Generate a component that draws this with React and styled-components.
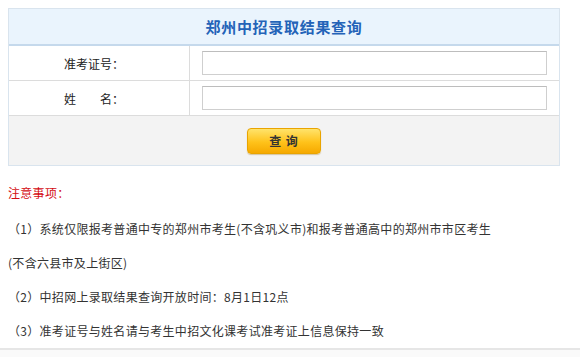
import * as React from "react";
import styled, { createGlobalStyle } from "styled-components";

const GlobalStyle = createGlobalStyle`
  body {
    margin: 0;
    background: #fff;
    font-family: "Noto Sans CJK SC", "Liberation Sans", sans-serif;
  }
`;

const Page = styled.div`
  padding: 8px 20px 0 8px;
`;

const QueryTable = styled.div`
  border: 1px solid #d9e4ee;
  display: flex;
  flex-direction: column;
`;

const TitleBar = styled.div`
  height: 35px;
  background: #eaf4fd;
  border-bottom: 2px solid #c5d9ec;
  display: flex;
  align-items: center;
  justify-content: center;
  color: #2463b8;
  font-size: 15px;
  font-weight: bold;
  letter-spacing: 0.7px;
`;

const FieldRow = styled.div`
  display: grid;
  grid-template-columns: 181px 1fr;
  height: 34px;
  border-bottom: 1px solid #dcdcdc;
`;

const Label = styled.div`
  display: flex;
  align-items: center;
  justify-content: center;
  padding-right: 10px;
  font-size: 12px;
  color: #222;
  border-right: 1px solid #dcdcdc;
  white-space: pre;
`;

const InputCell = styled.div`
  display: flex;
  align-items: center;
  padding: 0 12px 0 12px;
`;

const TextInput = styled.input`
  width: 100%;
  height: 24px;
  box-sizing: border-box;
  border: 1px solid #cfcfcf;
  border-top-color: #bdbdbd;
  background: #fff;
  outline: none;
`;

const ActionRow = styled.div`
  height: 49px;
  background: #f3f3f3;
  display: flex;
  align-items: center;
  justify-content: center;
`;

const SearchButton = styled.button`
  width: 74px;
  height: 26px;
  border: 1px solid #e9a400;
  border-radius: 4px;
  background: linear-gradient(#ffe36b, #ffc21a 55%, #f6a900);
  box-shadow: 0 1px 1px rgba(160, 110, 0, 0.35);
  font-family: "Noto Sans CJK SC", sans-serif;
  font-size: 12px;
  font-weight: bold;
  color: #333;
  letter-spacing: 1px;
  padding: 0;
  cursor: pointer;
`;

const Notes = styled.div`
  margin-top: 14px;
  font-size: 12px;
  color: #333;
  letter-spacing: 0.3px;
`;

const NotesTitle = styled.div`
  line-height: 26px;
  color: #d40d12;
  margin-bottom: 6px;
`;

const NoteLine = styled.div`
  line-height: 34px;
  height: 34px;
  white-space: nowrap;
`;

const Footer = styled.div`
  height: 9px;
  border-top: 2px solid #e6e6e6;
  background: #fafafa;
`;

function App() {
  return (
    <>
      <GlobalStyle />
      <Page>
        <QueryTable>
          <TitleBar>郑州中招录取结果查询</TitleBar>
          <FieldRow>
            <Label>准考证号：</Label>
            <InputCell>
              <TextInput type="text" />
            </InputCell>
          </FieldRow>
          <FieldRow>
            <Label>{"姓　　名："}</Label>
            <InputCell>
              <TextInput type="text" />
            </InputCell>
          </FieldRow>
          <ActionRow>
            <SearchButton type="button">查 询</SearchButton>
          </ActionRow>
        </QueryTable>
        <Notes>
          <NotesTitle>注意事项：</NotesTitle>
          <NoteLine>（1）系统仅限报考普通中专的郑州市考生(不含巩义市)和报考普通高中的郑州市市区考生</NoteLine>
          <NoteLine>(不含六县市及上街区)</NoteLine>
          <NoteLine>（2）中招网上录取结果查询开放时间：8月1日12点</NoteLine>
          <NoteLine>（3）准考证号与姓名请与考生中招文化课考试准考证上信息保持一致</NoteLine>
        </Notes>
      </Page>
      <Footer />
    </>
  );
}

export default App;
